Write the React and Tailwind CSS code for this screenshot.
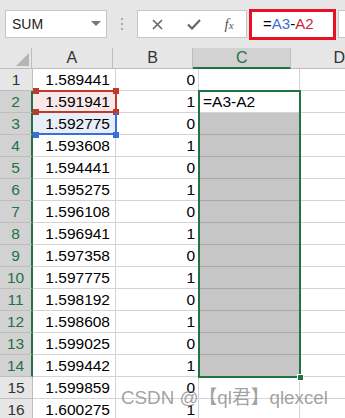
import React from "react";

const rows = [
  ["1.589441", 0],
  ["1.591941", 1],
  ["1.592775", 0],
  ["1.593608", 1],
  ["1.594441", 0],
  ["1.595275", 1],
  ["1.596108", 0],
  ["1.596941", 1],
  ["1.597358", 0],
  ["1.597775", 1],
  ["1.598192", 0],
  ["1.598608", 1],
  ["1.599025", 0],
  ["1.599442", 1],
  ["1.599859", 0],
  ["1.600275", 1],
];

function Handle({ className }) {
  return <div className={`absolute w-[6px] h-[6px] ${className}`} />;
}

export default function App() {
  return (
    <div
      className="w-[345px] h-[418px] overflow-hidden bg-white text-black"
      style={{ fontFamily: '"Liberation Sans", Arial, sans-serif' }}
    >
      {/* formula bar */}
      <div className="h-[48px] bg-[#e6e6e6] flex items-start pt-[9px]">
        <div className="ml-[5px] mt-[1px] w-[102px] h-[28px] bg-white border border-[#c6c6c6] flex items-center justify-between pl-[6px] pr-[5px]">
          <span className="text-[14px] text-[#222]">SUM</span>
          <svg width="10" height="6" viewBox="0 0 10 6">
            <path d="M0 0 L10 0 L5 5 Z" fill="#777" />
          </svg>
        </div>
        <div className="w-[30px] h-[30px] flex flex-col items-center justify-center gap-[3px]">
          <div className="w-[2px] h-[2px] bg-[#aaa]" />
          <div className="w-[2px] h-[2px] bg-[#aaa]" />
          <div className="w-[2px] h-[2px] bg-[#aaa]" />
        </div>
        <div className="mt-[1px] w-[110px] h-[28px] bg-white border border-[#c6c6c6] flex items-center">
          <div className="w-[38px] flex justify-center">
            <svg width="11" height="11" viewBox="0 0 11 11">
              <path d="M1 1 L10 10 M10 1 L1 10" stroke="#666" strokeWidth="1.6" />
            </svg>
          </div>
          <div className="w-[36px] flex justify-center">
            <svg width="14" height="11" viewBox="0 0 14 11">
              <path d="M1 5.5 L5 9.5 L13 1" stroke="#666" strokeWidth="2.2" fill="none" />
            </svg>
          </div>
          <div className="w-[34px] flex justify-center">
            <span
              className="text-[15px] italic text-[#555]"
              style={{ fontFamily: '"Liberation Serif", serif' }}
            >
              f<span className="text-[11px]">x</span>
            </span>
          </div>
        </div>
        <div className="ml-[2px] w-[87px] h-[31px] bg-white border-[3px] border-[#e81123] flex items-center pl-[11px] text-[15px]">
          <span>=</span>
          <span className="text-[#3a6ed8]">A3</span>
          <span>-</span>
          <span className="text-[#c8273a]">A2</span>
        </div>
        <div className="ml-[2px] flex-1 h-[28px] mt-[1px] bg-white border-l border-y border-[#c6c6c6]" />
      </div>

      {/* sheet */}
      <div className="relative">
        {/* column headers */}
        <div className="flex h-[21px] bg-[#e6e6e6] text-[16px] text-[#333]">
          <div className="w-[33px] border-r border-b border-[#bdbdbd] relative">
            <svg className="absolute right-[2px] bottom-[2px]" width="13" height="13" viewBox="0 0 13 13">
              <path d="M13 0 L13 13 L0 13 Z" fill="#b4b4b4" />
            </svg>
          </div>
          <div className="w-[83px] border-r border-b border-[#bdbdbd] flex items-center justify-center">A</div>
          <div className="w-[83px] border-r border-b border-[#bdbdbd] flex items-center justify-center">B</div>
          <div className="w-[101px] bg-[#d2d2d2] border-r border-[#bdbdbd] border-b-2 border-b-[#217346] flex items-center justify-center text-[#217346]">
            C
          </div>
          <div className="flex-1 border-b border-[#bdbdbd] flex items-center pl-[42px]">D</div>
        </div>

        {rows.map(([a, b], i) => {
          const n = i + 1;
          const sel = n >= 2 && n <= 14;
          const cBg = n >= 3 && n <= 14 ? "bg-[#c6c6c6] border-b-[#a8a8a8]" : "bg-white";
          const aBg = n === 2 ? "bg-[#f8e8e8]" : n === 3 ? "bg-[#e8eef8]" : "bg-white";
          return (
            <div key={n} className="flex h-[22px] text-[15.5px]">
              <div
                className={`w-[33px] flex items-center justify-center border-b ${
                  sel
                    ? "bg-[#d2d2d2] text-[#217346] border-b-[#bdbdbd] border-r-2 border-r-[#217346]"
                    : "bg-[#e6e6e6] text-[#333] border-b-[#bdbdbd] border-r border-r-[#bdbdbd]"
                }`}
              >
                {n}
              </div>
              <div className={`w-[83px] flex items-center justify-end pr-[5px] border-r border-b border-[#d4d4d4] ${aBg}`}>
                {a}
              </div>
              <div className="w-[83px] flex items-center justify-end pr-[3px] border-r border-b border-[#d4d4d4]">
                {b}
              </div>
              <div className={`w-[101px] flex items-center pl-[4px] border-r border-b border-[#d4d4d4] ${cBg}`}>
                {n === 2 ? "=A3-A2" : ""}
              </div>
              <div className="flex-1 border-b border-[#d4d4d4]" />
            </div>
          );
        })}

        {/* A2 reference (red) */}
        <div className="absolute left-[34px] top-[42px] w-[83px] h-[23px] border-y-2 border-r-2 border-[#c0392b]" />
        <Handle className="left-[33px] top-[40px] bg-[#c0392b]" />
        <Handle className="left-[113px] top-[40px] bg-[#c0392b]" />
        <Handle className="left-[33px] top-[61px] bg-[#c0392b]" />
        <Handle className="left-[113px] top-[61px] bg-[#c0392b]" />

        {/* A3 reference (blue) */}
        <div className="absolute left-[34px] top-[64px] w-[83px] h-[23px] border-b-2 border-r-2 border-[#3a6ed8]" />
        <Handle className="left-[33px] top-[84px] bg-[#3a6ed8]" />
        <Handle className="left-[113px] top-[84px] bg-[#3a6ed8]" />

        {/* selected range C2:C14 */}
        <div className="absolute left-[198px] top-[42px] w-[103px] h-[288px] border-2 border-[#217346]" />
        <div className="absolute left-[297px] top-[326px] w-[7px] h-[7px] bg-[#217346] border border-white" />

        {/* watermark */}
        <div
          className="absolute left-[121px] top-[336px] text-[18.8px] text-[#8a8a8a]/80 whitespace-nowrap"
          style={{ fontFamily: '"Liberation Sans", "Noto Sans CJK SC", sans-serif' }}
        >
          CSDN @【ql君】qlexcel
        </div>
      </div>
    </div>
  );
}
